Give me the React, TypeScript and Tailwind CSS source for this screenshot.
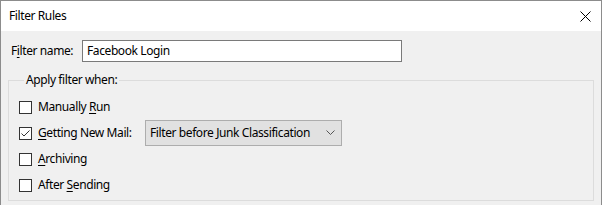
import React from "react";

function Check({ checked }: { checked?: boolean }) {
  return (
    <div className="w-[13px] h-[13px] border border-[#333333] bg-white shrink-0 flex items-center justify-center">
      {checked && (
        <svg width="11" height="11" viewBox="0 0 11 11">
          <path d="M1.5 5.5 L4 8 L9.5 2.5" fill="none" stroke="#333333" strokeWidth="1" />
        </svg>
      )}
    </div>
  );
}

function U({ children }: { children: React.ReactNode }) {
  return <span className="underline underline-offset-[2px]">{children}</span>;
}

export default function App() {
  return (
    <div
      className="w-[602px] h-[205px] border-t border-l border-r border-[#8c8c8c] bg-[#f0f0f0] text-[12px] text-black tracking-[-0.4px] overflow-hidden"
      style={{ fontFamily: '"Segoe UI", "Noto Sans", sans-serif' }}
    >
      <div className="h-[30px] bg-white flex items-center justify-between pl-[8px] pr-[10px]">
        <span className="leading-[16px]">Filter Rules</span>
        <svg width="11" height="11" viewBox="0 0 11 11">
          <path d="M0.5 0.5 L10.5 10.5 M10.5 0.5 L0.5 10.5" stroke="#000" strokeWidth="1" />
        </svg>
      </div>
      <div className="pt-[9px] px-[7px]">
        <div className="flex items-center pl-[3px]">
          <span className="w-[71px] leading-[16px]">
            F<U>i</U>lter name:
          </span>
          <div className="w-[320px] h-[22px] border border-[#7a7a7a] bg-white flex items-center pl-[4px]">
            <span className="leading-[16px]">Facebook Login</span>
          </div>
        </div>
        <fieldset className="mt-[10px] border border-[#dcdcdc] w-[586px] h-[129px] pl-[10px]">
          <legend className="ml-[5px] px-[2px] leading-[16px]">Apply filter when:</legend>
          <div className="pt-[6px] flex flex-col">
            <div className="h-[26px] flex items-center gap-[6px]">
              <Check />
              <span className="leading-[16px]">
                Manually <U>R</U>un
              </span>
            </div>
            <div className="h-[26px] flex items-center gap-[6px]">
              <Check checked />
              <span className="w-[101px] leading-[16px]">
                <U>G</U>etting New Mail:
              </span>
              <div className="w-[197px] h-[26px] border border-[#adadad] bg-[#e1e1e1] flex items-center justify-between pl-[4px] pr-[6px]">
                <span className="leading-[16px]">Filter before Junk Classification</span>
                <svg width="9" height="6" viewBox="0 0 9 6">
                  <path d="M0.5 0.5 L4.5 4.5 L8.5 0.5" fill="none" stroke="#555555" strokeWidth="1" />
                </svg>
              </div>
            </div>
            <div className="h-[26px] flex items-center gap-[6px]">
              <Check />
              <span className="leading-[16px]">
                <U>A</U>rchiving
              </span>
            </div>
            <div className="h-[26px] flex items-center gap-[6px]">
              <Check />
              <span className="leading-[16px]">
                After <U>S</U>ending
              </span>
            </div>
          </div>
        </fieldset>
      </div>
    </div>
  );
}
